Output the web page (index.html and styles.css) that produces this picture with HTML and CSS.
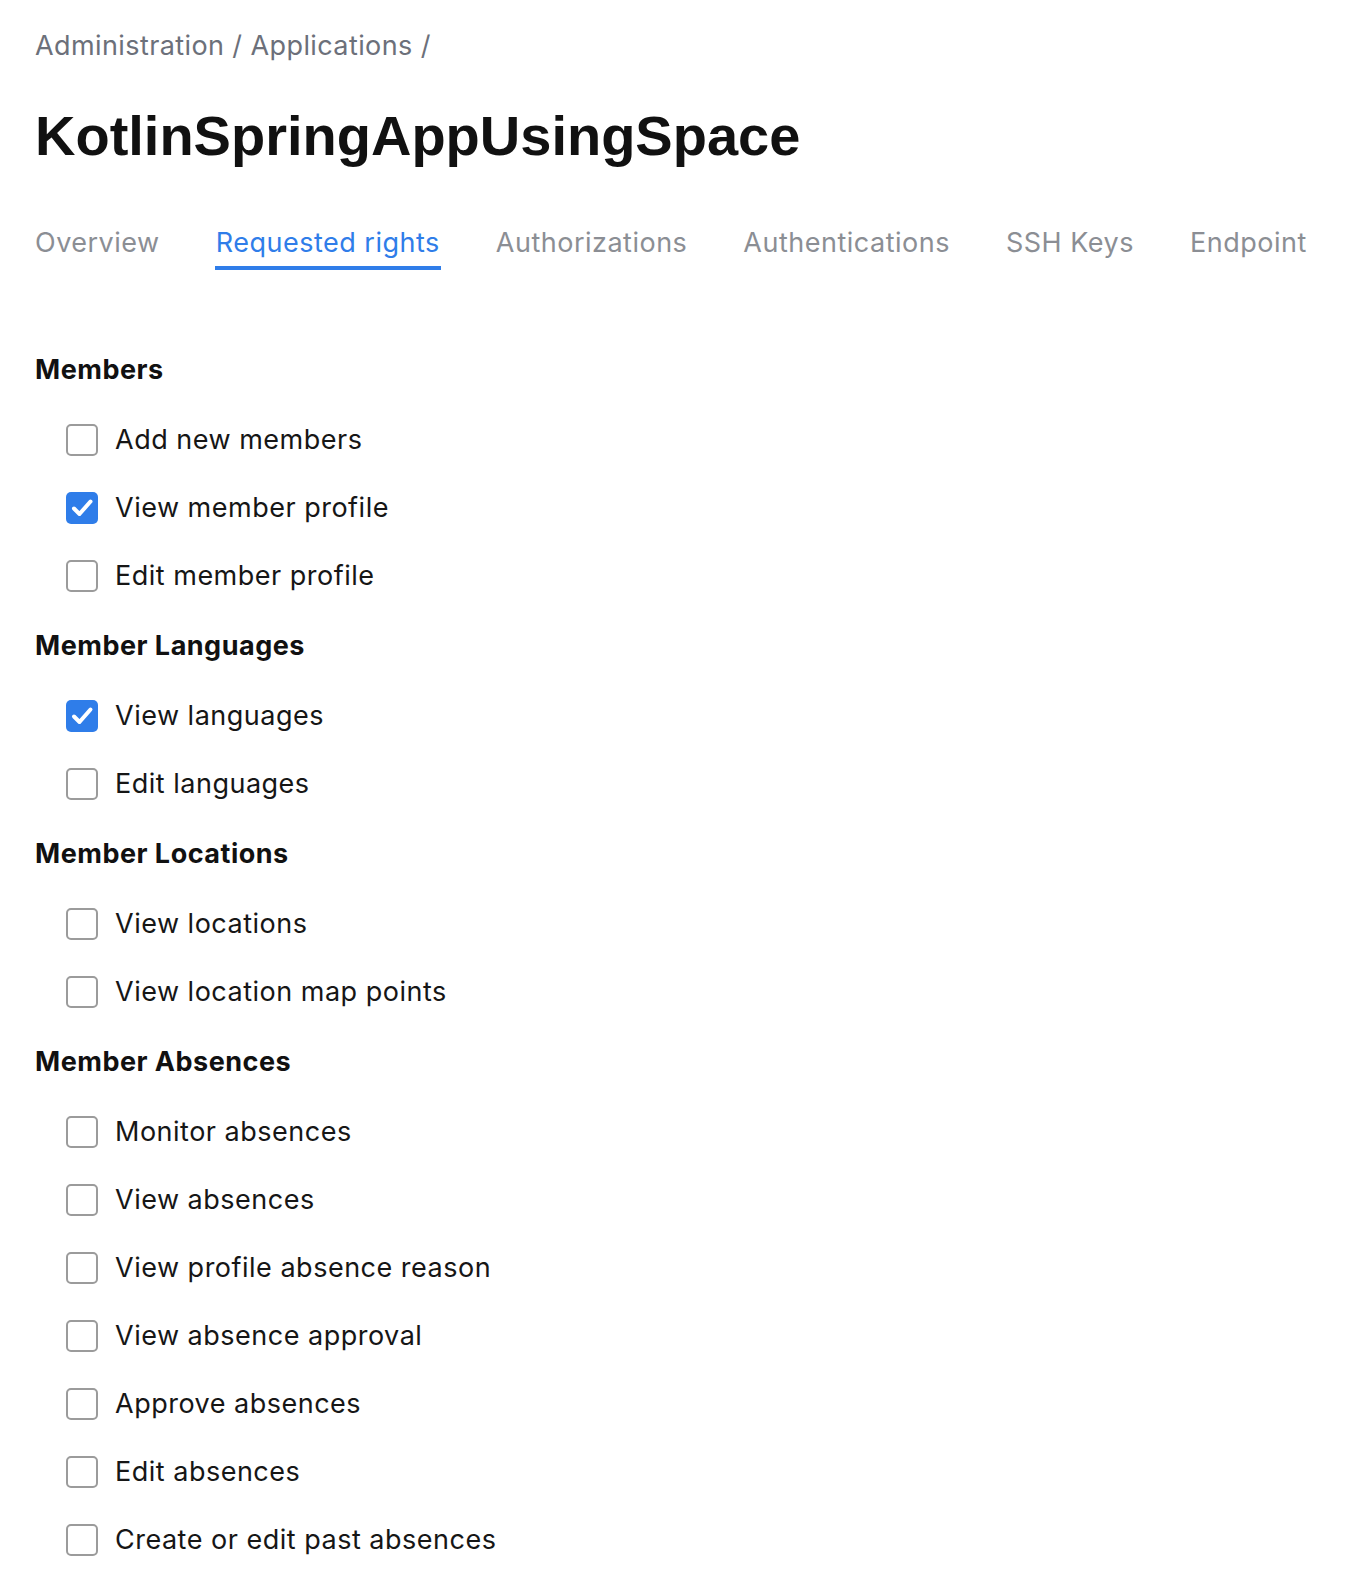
FILE: index.html
```html
<!DOCTYPE html>
<html>
<head>
<meta charset="utf-8">
<link rel="stylesheet" href="styles.css">
</head>
<body>
<div class="page">
  <div class="breadcrumb">Administration / Applications /</div>
  <h1 class="title">KotlinSpringAppUsingSpace</h1>
  <nav class="tabs">
    <span class="tab">Overview</span>
    <span class="tab active">Requested rights</span>
    <span class="tab">Authorizations</span>
    <span class="tab">Authentications</span>
    <span class="tab">SSH Keys</span>
    <span class="tab">Endpoint</span>
  </nav>

  <div class="sections">
    <section class="section">
      <h2 class="section-title">Members</h2>
      <label class="row"><span class="box"></span><span class="label">Add new members</span></label>
      <label class="row"><span class="box checked"><svg viewBox="0 0 32 32" width="32" height="32"><path d="M8 16.5 L13.5 22 L24.5 9.5" fill="none" stroke="#fff" stroke-width="4" stroke-linecap="round" stroke-linejoin="round"/></svg></span><span class="label">View member profile</span></label>
      <label class="row"><span class="box"></span><span class="label">Edit member profile</span></label>
    </section>
    <section class="section">
      <h2 class="section-title">Member Languages</h2>
      <label class="row"><span class="box checked"><svg viewBox="0 0 32 32" width="32" height="32"><path d="M8 16.5 L13.5 22 L24.5 9.5" fill="none" stroke="#fff" stroke-width="4" stroke-linecap="round" stroke-linejoin="round"/></svg></span><span class="label">View languages</span></label>
      <label class="row"><span class="box"></span><span class="label">Edit languages</span></label>
    </section>
    <section class="section">
      <h2 class="section-title">Member Locations</h2>
      <label class="row"><span class="box"></span><span class="label">View locations</span></label>
      <label class="row"><span class="box"></span><span class="label">View location map points</span></label>
    </section>
    <section class="section">
      <h2 class="section-title">Member Absences</h2>
      <label class="row"><span class="box"></span><span class="label">Monitor absences</span></label>
      <label class="row"><span class="box"></span><span class="label">View absences</span></label>
      <label class="row"><span class="box"></span><span class="label">View profile absence reason</span></label>
      <label class="row"><span class="box"></span><span class="label">View absence approval</span></label>
      <label class="row"><span class="box"></span><span class="label">Approve absences</span></label>
      <label class="row"><span class="box"></span><span class="label">Edit absences</span></label>
      <label class="row"><span class="box"></span><span class="label">Create or edit past absences</span></label>
    </section>
  </div>
</div>
</body>
</html>
```

FILE: styles.css
```css
html, body {
  margin: 0;
  padding: 0;
  background: #ffffff;
}

body {
  font-family: Inter, "Noto Sans", sans-serif;
  color: #161616;
}

.page {
  padding: 30px 0 0 35px;
}

.breadcrumb {
  font-size: 27px;
  letter-spacing: 0.4px;
  line-height: 32px;
  color: #6c707a;
}

.title {
  margin: 42px 0 0 0;
  font-family: "Liberation Sans", Arial, sans-serif;
  font-weight: 700;
  font-size: 56px;
  line-height: 64px;
  color: #111111;
}

.tabs {
  margin-top: 59px;
  display: flex;
  gap: 54px;
}

.tab {
  font-size: 27px;
  letter-spacing: 0.5px;
  line-height: 32px;
  color: #8b8e94;
  padding: 0 1px 7px 1px;
  border-bottom: 4px solid transparent;
}

.tab:first-child {
  padding-left: 0;
}

.tab.active {
  color: #2f7de9;
  border-bottom-color: #2f7de9;
}

.sections {
  margin-top: 82px;
  display: flex;
  flex-direction: column;
  gap: 18px;
}

.section {
  display: flex;
  flex-direction: column;
}

.section-title {
  margin: 0 0 18px 0;
  font-size: 27px;
  letter-spacing: 0.5px;
  line-height: 36px;
  font-weight: 700;
  color: #111111;
}

.row {
  height: 68px;
  display: flex;
  align-items: center;
  padding-left: 31px;
  gap: 17px;
}

.box {
  box-sizing: border-box;
  width: 32px;
  height: 32px;
  border: 2px solid #9b9b9b;
  border-radius: 5px;
  flex: none;
  display: flex;
  align-items: center;
  justify-content: center;
}

.box.checked {
  border: none;
  background: #2f7de9;
}

.box svg {
  display: block;
}

.label {
  font-size: 27px;
  letter-spacing: 0.5px;
  line-height: 32px;
  color: #161616;
}
```
